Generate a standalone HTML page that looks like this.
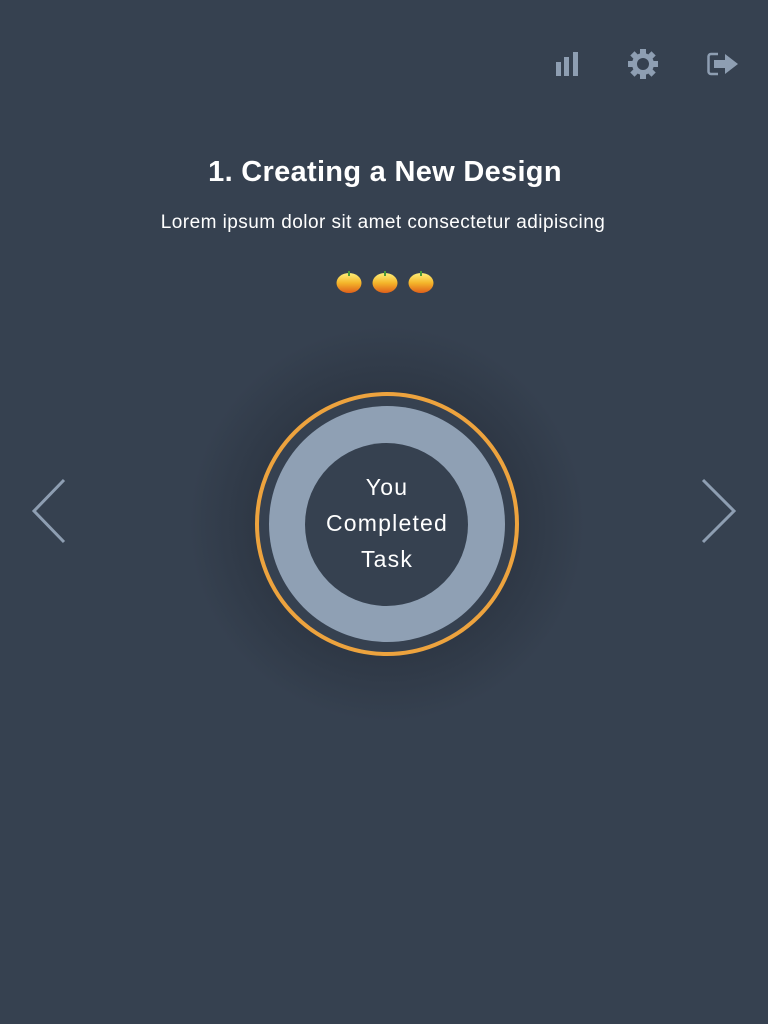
<!DOCTYPE html>
<html><head><style>
html,body{margin:0;padding:0;}
body{width:768px;height:1024px;background:#364150;font-family:"Liberation Sans",sans-serif;position:relative;overflow:hidden;}
h1{position:absolute;top:156px;left:0;width:770px;text-align:center;margin:0;color:#fff;font-size:29px;font-weight:bold;letter-spacing:0.3px;}
p{position:absolute;top:212px;left:0;width:766px;text-align:center;margin:0;color:#fff;font-size:19px;letter-spacing:0.45px;}
.glow{position:absolute;left:187px;top:324px;width:400px;height:400px;border-radius:50%;background:radial-gradient(circle,rgba(30,36,46,0.55) 30%,rgba(54,65,80,0) 70%);}
.c{position:absolute;border-radius:50%;}
.t{position:absolute;left:295px;top:469px;width:184px;text-align:center;color:#fff;font-size:23px;line-height:36px;letter-spacing:1.2px;}
</style></head><body>
<svg style="position:absolute;left:0;top:0" width="768" height="1024">
<g fill="#8e9eb2">
<rect x="556" y="62" width="5" height="14"/><rect x="564" y="57" width="5" height="19"/><rect x="573" y="52" width="5" height="24"/>
</g>
<g transform="translate(643,64)" fill="#8e9eb2">
<circle r="11"/>
<g><rect x="-3" y="-15" width="6" height="30"/><rect x="-15" y="-3" width="30" height="6"/>
<rect x="-3" y="-15" width="6" height="30" transform="rotate(45)"/><rect x="-3" y="-15" width="6" height="30" transform="rotate(-45)"/></g>
<circle r="6" fill="#364150"/>
</g>
<path d="M718 54h-7a2.5 2.5 0 0 0-2.5 2.5v15a2.5 2.5 0 0 0 2.5 2.5h7" fill="none" stroke="#8e9eb2" stroke-width="2.5"/>
<path d="M714 60h11v-6l13 10-13 10v-6h-11z" fill="#8e9eb2"/>
<path d="M64 480 34 511 64 542" fill="none" stroke="#8e9eb2" stroke-width="3"/>
<path d="M703 480 734 511 703 542" fill="none" stroke="#8e9eb2" stroke-width="3"/>
<defs><linearGradient id="g" x1="0" y1="0" x2="0" y2="1"><stop offset="0" stop-color="#fff07a"/><stop offset=".5" stop-color="#f4b52a"/><stop offset="1" stop-color="#e0601a"/></linearGradient></defs>
<g id="tm"><ellipse cx="349" cy="283" rx="12.5" ry="10" fill="url(#g)"/><path d="M349 271v5" stroke="#4a9a3a" stroke-width="2"/></g>
<use href="#tm" x="36"/><use href="#tm" x="72"/>
</svg>
<h1>1. Creating a New Design</h1>
<p>Lorem ipsum dolor sit amet consectetur adipiscing</p>
<div class="glow"></div>
<div class="c" style="left:255px;top:392px;width:256px;height:256px;border:4px solid #eda33e;background:#364150"></div>
<div class="c" style="left:269px;top:406px;width:236px;height:236px;background:#8fa0b4"></div>
<div class="c" style="left:305px;top:443px;width:163px;height:163px;background:#364150"></div>
<div class="t">You<br>Completed<br>Task</div>
</body></html>
